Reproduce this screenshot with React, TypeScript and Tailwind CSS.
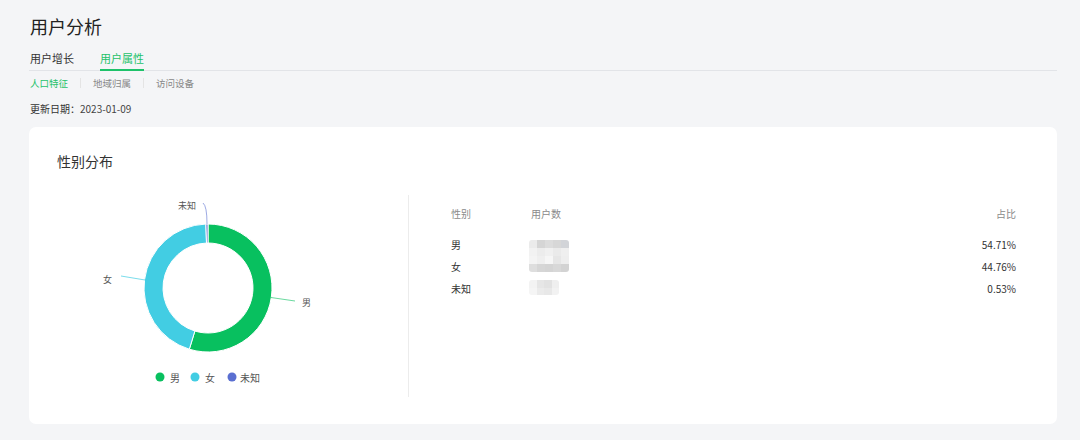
import React from 'react';

const FONT = { fontFamily: '"Noto Sans CJK SC", "Noto Sans", sans-serif' };

const slices = [
  { name: '男', value: 54.71, color: '#08c05f' },
  { name: '女', value: 44.76, color: '#42cde3' },
  { name: '未知', value: 0.53, color: '#5a6fd1' },
];

// 圆环中心和半径（svg 坐标）
const CX = 151;
const CY = 98;
const R_OUT = 64;
const R_IN = 45;

function pt(r: number, deg: number) {
  const a = (deg * Math.PI) / 180;
  return [CX + r * Math.sin(a), CY - r * Math.cos(a)];
}

function arc(start: number, end: number) {
  const large = end - start > 180 ? 1 : 0;
  const [x1, y1] = pt(R_OUT, start);
  const [x2, y2] = pt(R_OUT, end);
  const [x3, y3] = pt(R_IN, end);
  const [x4, y4] = pt(R_IN, start);
  return `M${x1} ${y1} A${R_OUT} ${R_OUT} 0 ${large} 1 ${x2} ${y2} L${x3} ${y3} A${R_IN} ${R_IN} 0 ${large} 0 ${x4} ${y4} Z`;
}

function Donut() {
  let acc = 0;
  const paths = slices.map((s) => {
    const start = acc;
    const end = acc + (s.value / 100) * 360;
    acc = end;
    return <path key={s.name} d={arc(start, end)} fill={s.color} stroke="#fff" strokeWidth={1} />;
  });

  return (
    <svg width={351} height={210} viewBox="0 0 351 210" style={FONT}>
      {paths}
      {/* 标签引导线 */}
      <polyline points="214,107.5 238,111" fill="none" stroke="#08c05f" strokeOpacity={0.6} strokeWidth={1} />
      <polyline points="88,90 64,86" fill="none" stroke="#42cde3" strokeOpacity={0.7} strokeWidth={1} />
      <path d="M150 34 Q150 16 146 13" fill="none" stroke="#5a6fd1" strokeOpacity={0.6} strokeWidth={1} />
      <text x={245} y={112} fontSize={9} fill="#555" dominantBaseline="central">男</text>
      <text x={55} y={89} fontSize={9} fill="#555" textAnchor="end" dominantBaseline="central">女</text>
      <text x={139} y={15} fontSize={9} fill="#555" textAnchor="end" dominantBaseline="central">未知</text>
      {/* 图例 */}
      <circle cx={103} cy={187} r={4.5} fill="#08c05f" />
      <text x={113} y={187} fontSize={10} fill="#555" dominantBaseline="central">男</text>
      <circle cx={138} cy={187} r={4.5} fill="#42cde3" />
      <text x={148} y={187} fontSize={10} fill="#555" dominantBaseline="central">女</text>
      <circle cx={175} cy={187} r={4.5} fill="#5a6fd1" />
      <text x={183} y={187} fontSize={10} fill="#555" dominantBaseline="central">未知</text>
    </svg>
  );
}

const mosaicA = [
  ['#ebebeb', '#d5d5d5', '#dcdcdc', '#d7d7d7', '#d2d4d8'],
  ['#f2f2f2', '#ececec', '#f0f0f0', '#eaeaea', '#efefef'],
  ['#f4f4f4', '#efefef', '#f6f6f6', '#e6e6e6', '#eeeeee'],
  ['#dedede', '#d6d6d6', '#d4d4d4', '#d8d8d8', '#d3d3d3'],
];
const mosaicB = [
  ['#f3f3f3', '#e6e6e6', '#e2e2e2', '#efefef'],
  ['#f5f5f5', '#ebebeb', '#e8e8e8', '#f2f2f2'],
];

function Mosaic({ cells, size }: { cells: string[][]; size: number }) {
  return (
    <div className="flex flex-col overflow-hidden rounded-[3px]">
      {cells.map((row, i) => (
        <div key={i} className="flex">
          {row.map((c, j) => (
            <div key={j} style={{ background: c, width: size, height: size }} />
          ))}
        </div>
      ))}
    </div>
  );
}

const rows = [
  { name: '男', pct: '54.71%' },
  { name: '女', pct: '44.76%' },
  { name: '未知', pct: '0.53%' },
];

export default function App() {
  return (
    <div className="min-h-[440px] w-[1080px] bg-[#f4f5f7] pl-[29px] pt-[13px] text-[#333]" style={FONT}>
      <h1 className="pl-px text-[18px] leading-[26px] text-[#222]">用户分析</h1>

      <div className="mt-[9px] flex w-[1028px] gap-[26px] border-b border-[#e2e4e8] pl-px text-[11px]">
        <div className="-mb-px border-b-2 border-transparent leading-[21px] text-[#333]">用户增长</div>
        <div className="-mb-px border-b-2 border-[#1ec26a] leading-[21px] text-[#1ec26a]">用户属性</div>
      </div>

      <div className="mt-[4px] flex items-center pl-px text-[9.5px] leading-[16px]">
        <span className="text-[#1ec26a]">人口特征</span>
        <span className="mx-[12px] h-[10px] w-px bg-[#e4e4e4]" />
        <span className="text-[#888]">地域归属</span>
        <span className="mx-[12px] h-[10px] w-px bg-[#e4e4e4]" />
        <span className="text-[#888]">访问设备</span>
      </div>

      <div className="mt-[10px] flex pl-px text-[10px] leading-[16px]">
        <span className="text-[#333]">更新日期：</span>
        <span className="text-[#444]">2023-01-09</span>
      </div>

      <div className="mt-[10px] h-[297px] w-[1028px] rounded-[7px] bg-white px-[28px] pt-[24px]">
        <h2 className="text-[14px] leading-[20px] text-[#333]">性别分布</h2>
        <div className="mt-[19px] flex">
          <Donut />
          <div className="mt-[5px] h-[202px] flex-1 border-l border-[#ececec] pl-[42px] pr-[13px] pt-[11px] text-[10px]">
            <div className="flex leading-[16px] text-[#8a8a8a]">
              <span className="w-[80px]">性别</span>
              <span className="flex-1">用户数</span>
              <span>占比</span>
            </div>
            <div className="relative mt-[12px]">
              {rows.map((r) => (
                <div key={r.name} className="flex leading-[22px] text-[#333]">
                  <span className="w-[80px]">{r.name}</span>
                  <span className="flex-1" />
                  <span>{r.pct}</span>
                </div>
              ))}
              {/* 用户数打码 */}
              <div className="absolute left-[78px] top-[6px]">
                <Mosaic cells={mosaicA} size={8} />
              </div>
              <div className="absolute left-[78px] top-[46px]">
                <Mosaic cells={mosaicB} size={7.5} />
              </div>
            </div>
          </div>
        </div>
      </div>
    </div>
  );
}
